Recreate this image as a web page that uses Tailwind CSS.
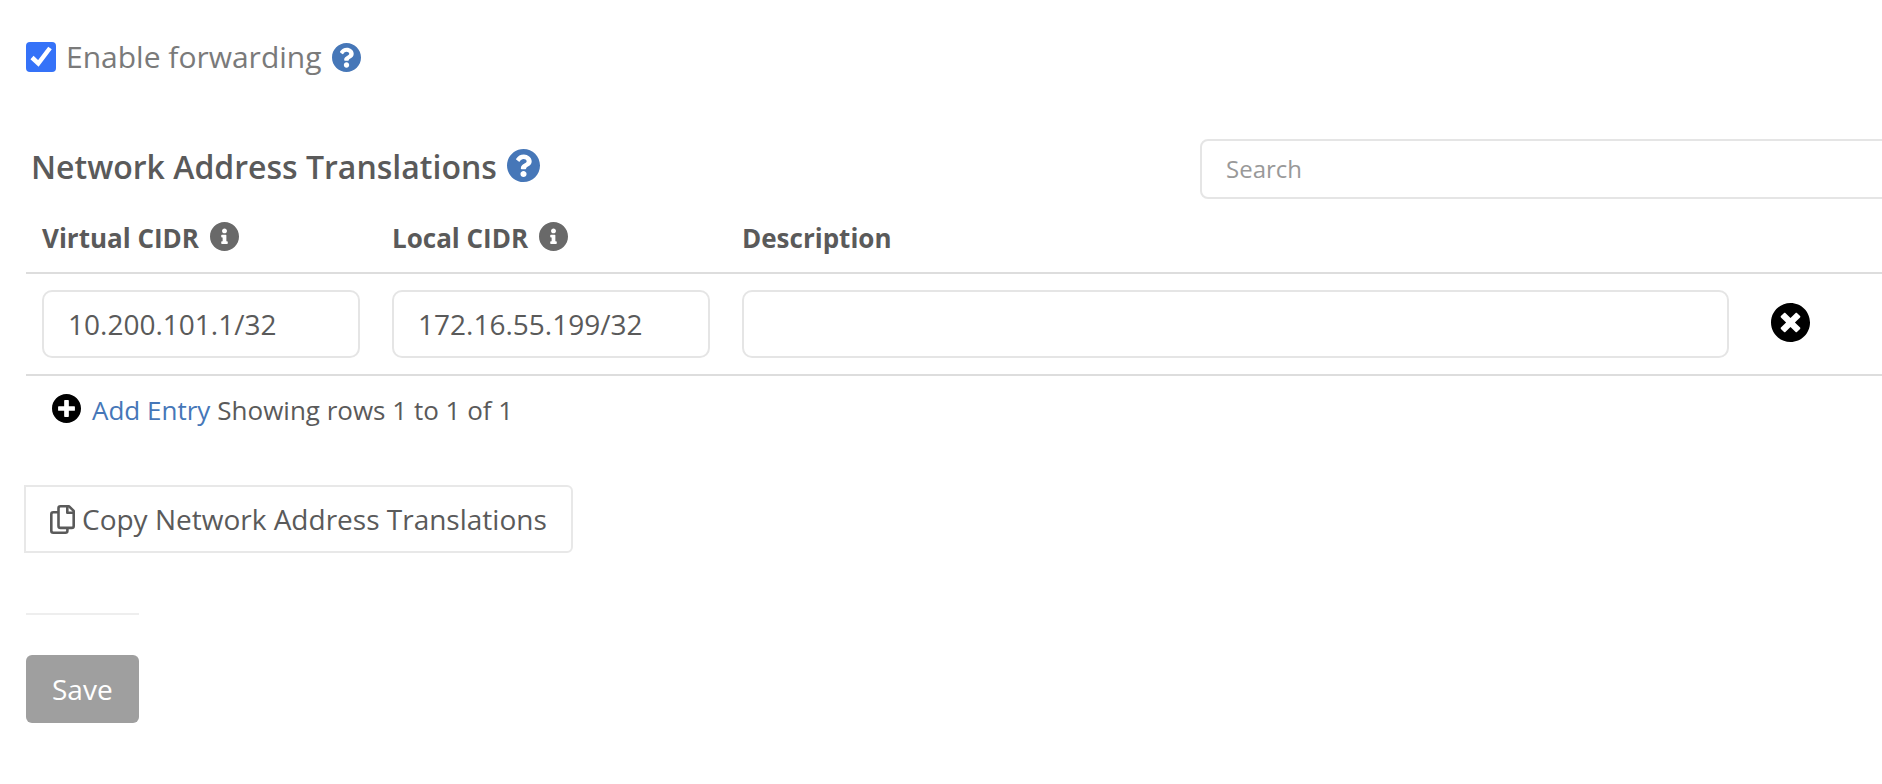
<!DOCTYPE html>
<html lang="en">
<head>
<meta charset="utf-8">
<title>Network Address Translations</title>
<script src="https://cdn.jsdelivr.net/npm/@tailwindcss/browser@4"></script>
</head>
<body class="overflow-x-hidden bg-white font-['Open_Sans',sans-serif] text-[28px] text-[#5a5a5a]">
<svg class="hidden" aria-hidden="true">
  <symbol id="question" viewBox="8 8 496 496"><path fill="currentColor" d="M504 256c0 136.997-111.043 248-248 248S8 392.997 8 256C8 119.083 119.043 8 256 8s248 111.083 248 248zM262.655 90c-54.497 0-89.255 22.957-116.549 63.758-3.536 5.286-2.353 12.415 2.715 16.258l34.699 26.31c5.205 3.947 12.621 3.008 16.665-2.122 17.864-22.658 30.113-35.797 57.303-35.797 20.429 0 45.698 13.148 45.698 32.958 0 14.976-12.363 22.667-32.534 33.976C247.128 238.528 216 254.941 216 296v4c0 6.627 5.373 12 12 12h56c6.627 0 12-5.373 12-12v-1.333c0-28.462 83.186-29.647 83.186-106.667 0-58.002-60.165-102-116.531-102zM256 338c-25.365 0-46 20.635-46 46 0 25.364 20.635 46 46 46s46-20.636 46-46c0-25.365-20.635-46-46-46z"/></symbol>
  <symbol id="info" viewBox="8 8 496 496"><path fill="currentColor" d="M256 8C119.043 8 8 119.083 8 256c0 136.997 111.043 248 248 248s248-111.003 248-248C504 119.083 392.957 8 256 8zm0 110c23.196 0 42 18.804 42 42s-18.804 42-42 42-42-18.804-42-42 18.804-42 42-42zm56 254c0 6.627-5.373 12-12 12h-88c-6.627 0-12-5.373-12-12v-24c0-6.627 5.373-12 12-12h12v-64h-12c-6.627 0-12-5.373-12-12v-24c0-6.627 5.373-12 12-12h64c6.627 0 12 5.373 12 12v100h12c6.627 0 12 5.373 12 12v24z"/></symbol>
</svg>
<main class="pl-[26px] pt-[36px]">
  <div class="flex items-center">
    <span class="grid size-[30px]">
      <input id="forwarding" type="checkbox" checked class="col-start-1 row-start-1 size-[30px] appearance-none rounded-[4px] bg-[#3572f8]">
      <svg class="pointer-events-none col-start-1 row-start-1 size-[30px]" viewBox="0 0 30 30" fill="none" stroke="#fff" stroke-width="4.500" aria-hidden="true"><path d="M6 15.500L12.300 21.500L24 6"/></svg>
    </span>
    <label for="forwarding" class="ml-[10px] text-[30px] leading-[42px] text-[#7a7a7a]">Enable forwarding</label>
    <svg class="ml-[10px] size-[29px] text-[#4677b8]" aria-hidden="true"><use href="#question"/></svg>
  </div>

  <section class="mt-[61px]">
    <div class="flex">
      <h2 class="flex w-[1174px] items-center pb-[4px] pl-[5px] text-[32px] leading-[56px] font-semibold">Network Address Translations
        <svg class="mb-[4px] ml-[10px] size-[33px] text-[#4677b8]" aria-hidden="true"><use href="#question"/></svg>
      </h2>
      <input type="text" aria-label="Search" placeholder="Search" class="-mr-[16px] h-[60px] min-w-0 flex-1 rounded-[8px] border-2 border-[#e5e5e5] px-[24px] pb-[2px] text-[24px] placeholder:text-[#999999]">
    </div>
    <table class="w-full table-fixed border-collapse">
      <colgroup><col class="w-[350px]"><col class="w-[350px]"><col><col class="w-[137px]"></colgroup>
      <thead>
        <tr class="h-[74px] border-b-2 border-[#dddddd] text-left text-[26px] font-bold">
          <th class="px-[16px] pt-[6px]"><span class="flex items-center">Virtual CIDR<svg class="mb-[4px] ml-[11px] size-[29px] text-[#696969]" aria-hidden="true"><use href="#info"/></svg></span></th>
          <th class="px-[16px] pt-[6px]"><span class="flex items-center">Local CIDR<svg class="mb-[4px] ml-[11px] size-[29px] text-[#696969]" aria-hidden="true"><use href="#info"/></svg></span></th>
          <th class="px-[16px] pt-[6px]">Description</th>
          <th></th>
        </tr>
      </thead>
      <tbody>
        <tr class="h-[102px] border-b-2 border-[#dddddd]">
          <td class="px-[16px]"><input type="text" aria-label="Virtual CIDR" value="10.200.101.1/32" class="block h-[68px] w-full rounded-[10px] border-2 border-[#e5e5e5] px-[24px]"></td>
          <td class="px-[16px]"><input type="text" aria-label="Local CIDR" value="172.16.55.199/32" class="block h-[68px] w-full rounded-[10px] border-2 border-[#e5e5e5] px-[24px]"></td>
          <td class="px-[16px]"><input type="text" aria-label="Description" class="block h-[68px] w-full rounded-[10px] border-2 border-[#e5e5e5] px-[24px]"></td>
          <td class="pb-[4px] pl-[26px]"><button type="button" aria-label="Remove entry" class="block text-black"><svg class="size-[39px]" viewBox="8 8 496 496" aria-hidden="true"><path fill="currentColor" d="M256 8C119 8 8 119 8 256s111 248 248 248 248-111 248-248S393 8 256 8zm121.600 313.100c4.700 4.700 4.700 12.300 0 17L338 377.600c-4.700 4.700-12.300 4.700-17 0L256 312l-65.100 65.600c-4.700 4.700-12.300 4.700-17 0L134.400 338c-4.700-4.700-4.700-12.300 0-17l65.600-65-65.600-65.100c-4.700-4.700-4.700-12.300 0-17l39.600-39.600c4.700-4.700 12.300-4.700 17 0l65 65.700 65.100-65.600c4.700-4.700 12.300-4.700 17 0l39.600 39.600c4.700 4.700 4.700 12.300 0 17L312 256l65.600 65.100z"/></svg></button></td>
        </tr>
      </tbody>
    </table>
    <div class="flex items-center gap-[7px] pt-[15px] pl-[26px] text-[26px] leading-[38px]">
      <a href="#" class="flex items-center gap-[11px] text-[#4677b8]"><svg class="mb-[3px] size-[29px] text-black" viewBox="8 8 496 496" aria-hidden="true"><path fill="currentColor" d="M256 8C119 8 8 119 8 256s111 248 248 248 248-111 248-248S393 8 256 8zm144 276c0 6.600-5.400 12-12 12h-92v92c0 6.600-5.400 12-12 12h-56c-6.600 0-12-5.400-12-12v-92h-92c-6.600 0-12-5.400-12-12v-56c0-6.600 5.400-12 12-12h92v-92c0-6.600 5.400-12 12-12h56c6.600 0 12 5.400 12 12v92h92c6.600 0 12 5.400 12 12v56z"/></svg>Add Entry</a>
      <span>Showing rows 1 to 1 of 1</span>
    </div>
  </section>

  <button type="button" class="mt-[56px] -ml-[2px] flex h-[68px] items-center gap-[7px] rounded-r-[6px] border-2 border-[#e8e8e8] px-[24px]">
    <svg class="h-[29px] w-[25px]" viewBox="0 0 25 29" fill="none" stroke="currentColor" stroke-width="2.600" stroke-linejoin="round" aria-hidden="true"><path d="M8.500 7.300H3.300a2 2 0 0 0-2 2v16.400a2 2 0 0 0 2 2h12.100a2 2 0 0 0 2-2v-3"/><path d="M10.500 1.300h8.600l4.600 4.600v15a2 2 0 0 1-2 2H10.500a2 2 0 0 1-2-2V3.300a2 2 0 0 1 2-2z"/><path d="M17.300 1.500v6.300h6.300"/></svg>
    Copy Network Address Translations
  </button>
  <div class="mt-[60px] inline-block border-t-2 border-[#eeeeee] pt-[40px]">
    <button type="button" class="block h-[68px] rounded-[6px] bg-[#9f9f9f] px-[26px] text-white">Save</button>
  </div>
</main>
</body>
</html>
